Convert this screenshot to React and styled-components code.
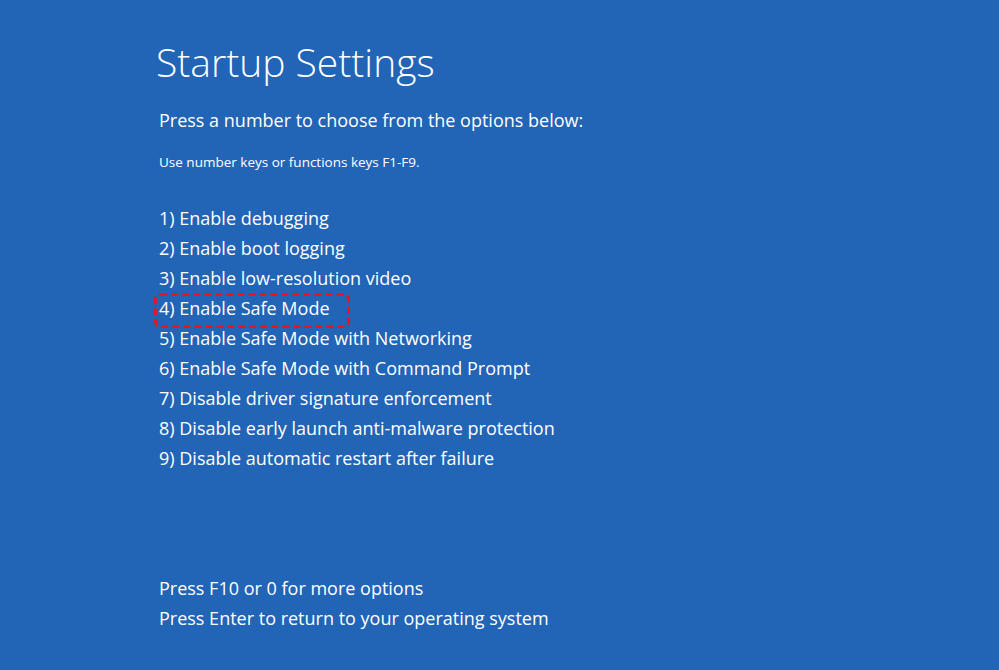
import React from 'react';
import styled, { createGlobalStyle } from 'styled-components';

const GlobalStyle = createGlobalStyle`
  html, body {
    margin: 0;
    padding: 0;
    background-color: #2264b5;
  }
`;

const StyledScreen = styled.div`
  width: 999px;
  height: 670px;
  box-sizing: border-box;
  padding: 34px 0 0 156px;
  background-color: #2264b5;
  color: #ffffff;
  font-family: "Open Sans", "Noto Sans", sans-serif;
  display: flex;
  flex-direction: column;
  overflow: hidden;
`;

const StyledTitle = styled.h1`
  margin: 0;
  font-size: 39px;
  font-weight: 300;
  line-height: 56px;
`;

const StyledLead = styled.div`
  margin: 15px 0 0 3px;
  font-size: 18px;
  line-height: 30px;
`;

const StyledHint = styled.div`
  margin: 18px 0 0 3px;
  font-size: 13.5px;
  line-height: 18px;
`;

const StyledList = styled.div`
  margin: 32px 0 0 3px;
  display: flex;
  flex-direction: column;
`;

const StyledRow = styled.div`
  position: relative;
  font-size: 18px;
  line-height: 30px;
  height: 30px;
  white-space: nowrap;
`;

const StyledMark = styled.svg`
  position: absolute;
  left: -5px;
  top: 0;
  overflow: visible;
`;

const StyledFooter = styled.div`
  margin: 100px 0 0 3px;
  display: flex;
  flex-direction: column;
`;

const options = [
  '1) Enable debugging',
  '2) Enable boot logging',
  '3) Enable low-resolution video',
  '4) Enable Safe Mode',
  '5) Enable Safe Mode with Networking',
  '6) Enable Safe Mode with Command Prompt',
  '7) Disable driver signature enforcement',
  '8) Disable early launch anti-malware protection',
  '9) Disable automatic restart after failure',
];

function OptionRow({ label, highlighted }) {
  return (
    <StyledRow>
      {label}
      {highlighted && (
        <StyledMark width="196" height="35" viewBox="0 0 196 35">
          <rect
            x="1.4"
            y="1.4"
            width="193.2"
            height="32.2"
            rx="5"
            fill="none"
            stroke="#f0101e"
            strokeWidth="2.8"
            strokeDasharray="7 4"
          />
        </StyledMark>
      )}
    </StyledRow>
  );
}

export default function App() {
  return (
    <>
      <GlobalStyle />
      <StyledScreen>
        <StyledTitle>Startup Settings</StyledTitle>
        <StyledLead>Press a number to choose from the options below:</StyledLead>
        <StyledHint>Use number keys or functions keys F1-F9.</StyledHint>
        <StyledList>
          {options.map((label, i) => (
            <OptionRow key={label} label={label} highlighted={i === 3} />
          ))}
        </StyledList>
        <StyledFooter>
          <StyledRow>Press F10 or 0 for more options</StyledRow>
          <StyledRow>Press Enter to return to your operating system</StyledRow>
        </StyledFooter>
      </StyledScreen>
    </>
  );
}
